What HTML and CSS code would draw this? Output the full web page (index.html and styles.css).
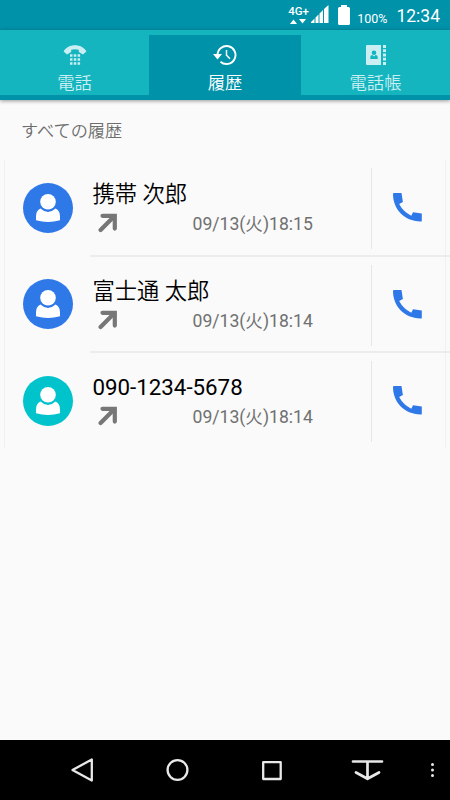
FILE: index.html
```html
<!doctype html>
<html lang="ja">
    <head>
        <meta charset="utf-8">
        <title>履歴</title>
        <link rel="stylesheet" href="styles.css">
    </head>
    <body>
        <svg class="symbols" width="0" height="0">
            <symbol id="person" viewBox="0 0 50 50">
                <path d="M17.500 25.500Q25 32.500 32.500 25.500Q37 27.500 37 33V37.200Q25 40.800 13 37.200V33Q13 27.500 17.500 25.500Z"/>
                <circle cx="25" cy="18.800" r="7.800"/>
            </symbol>
            <symbol id="outgoing" viewBox="0 0 20 20">
                <path d="M4.500 2.800H16.800V15.600" fill="none" stroke="currentColor" stroke-width="4.200" stroke-linecap="round"/>
                <path d="M16 3.500L2.600 17" fill="none" stroke="currentColor" stroke-width="4.200" stroke-linecap="round"/>
            </symbol>
            <symbol id="call" viewBox="0 0 29 29">
                <path d="M1 0H8.500L9.900 9L6.200 11Q10 18.500 18.300 22.800L20 19.200L28.800 20.500V27.700Q28.800 28.700 27.500 28.600C11 28 0 16 0 1Q0 0 1 0Z"/>
            </symbol>
        </svg>

        <div class="status">
            <div class="network">
                <span>4G+</span>
                <svg width="17" height="5" viewBox="0 0 17 5"><path d="M0 5L3.500 0.500L7 5ZM9 0H16L12.500 4.500Z"/></svg>
            </div>
            <svg class="signal" width="18" height="18" viewBox="0 0 18 18"><path d="M0 18V17L3.500 13.500V18ZM4.500 18V12.500L7.500 9.500V18ZM8.500 18V8.500L12 5V18ZM13 18V4L17.500 0V18Z"/></svg>
            <svg class="battery" width="12" height="20" viewBox="0 0 12 20"><path d="M3 2V0H9V2H10.500Q12 2 12 3.500V18.500Q12 20 10.500 20H1.500Q0 20 0 18.500V3.500Q0 2 1.500 2Z"/></svg>
            <span class="percent">100%</span>
            <span class="clock">12:34</span>
        </div>

        <ul class="tabs">
            <li>
                <svg width="24" height="20" viewBox="0 0 24 20">
                    <path d="M.600 6.500C5-1.700 19-1.700 23.400 6.500L20 9.500L15.800 7V4.700Q12 3.700 8.200 4.700V7L4 9.500Z"/>
                    <path d="M7 9.300h2.500v2.500h-2.500zm3.800 0h2.500v2.500h-2.500zm3.800 0h2.500v2.500h-2.500zm-7.600 4h2.500v2.500h-2.500zm3.800 0h2.500v2.500h-2.500zm3.800 0h2.500v2.500h-2.500zm-7.600 4h2.500v2.500h-2.500zm3.800 0h2.500v2.500h-2.500zm3.800 0h2.500v2.500h-2.500z"/>
                </svg>
                <span>電話</span>
            </li>
            <li class="active">
                <svg width="24" height="20" viewBox="0 0 24 20">
                    <path d="M4.500 10A9 9 0 1 1 7.500 16.700" fill="none" stroke="currentColor" stroke-width="1.900"/>
                    <path d="M0 9H9L4.500 14.500Z"/>
                    <path d="M13.500 5V10.300L17 13.800" fill="none" stroke="currentColor" stroke-width="1.500"/>
                </svg>
                <span>履歴</span>
            </li>
            <li>
                <svg width="24" height="20" viewBox="0 0 24 20">
                    <path fill-rule="evenodd" d="M3 0H17V20H3Q2 20 2 19V1Q2 0 3 0ZM10 5.500A2.300 2.300 0 1 0 10 10.100A2.300 2.300 0 1 0 10 5.500ZM6.300 14H13.700V12Q13.700 10 11.500 10L10 11.500L8.500 10Q6.300 10 6.300 12Z"/>
                    <path d="M19 0h3v3h-3zm0 4.300h3v2.800h-3zm0 4.300h3v2.800h-3zm0 4.200h3v2.800h-3zm0 4.200h3v3h-3z"/>
                </svg>
                <span>電話帳</span>
            </li>
        </ul>

        <div class="content">
            <h3>すべての履歴</h3>
            <ul class="history">
                <li>
                    <div class="avatar"><svg width="50" height="50"><use href="#person"/></svg></div>
                    <div class="info">
                        <p class="name">携帯 次郎</p>
                        <p class="date"><svg width="20" height="20"><use href="#outgoing"/></svg><span>09/13(火)18:15</span></p>
                    </div>
                    <div class="call"><svg width="29" height="29"><use href="#call"/></svg></div>
                </li>
                <li>
                    <div class="avatar"><svg width="50" height="50"><use href="#person"/></svg></div>
                    <div class="info">
                        <p class="name">富士通 太郎</p>
                        <p class="date"><svg width="20" height="20"><use href="#outgoing"/></svg><span>09/13(火)18:14</span></p>
                    </div>
                    <div class="call"><svg width="29" height="29"><use href="#call"/></svg></div>
                </li>
                <li>
                    <div class="avatar unknown"><svg width="50" height="50"><use href="#person"/></svg></div>
                    <div class="info">
                        <p class="name number">090-1234-5678</p>
                        <p class="date"><svg width="20" height="20"><use href="#outgoing"/></svg><span>09/13(火)18:14</span></p>
                    </div>
                    <div class="call"><svg width="29" height="29"><use href="#call"/></svg></div>
                </li>
            </ul>
        </div>

        <div class="navbar">
            <svg width="450" height="60" viewBox="0 0 450 60">
                <g fill="none" stroke="#e8e8e8" stroke-width="2.300" stroke-linejoin="round" stroke-linecap="round">
                    <path d="M91.800 19.500V40.500L72.500 30Z"/>
                    <circle cx="177.500" cy="30" r="9.900"/>
                    <rect x="263.200" y="22.200" width="17.500" height="16.800"/>
                    <path d="M353 21.500H382M367.500 22V38.500M356 32.500L367.500 38.800L379 32.500" stroke-width="2.700"/>
                </g>
                <g fill="#e8e8e8">
                    <circle cx="432.500" cy="24.500" r="1.500"/>
                    <circle cx="432.500" cy="30" r="1.500"/>
                    <circle cx="432.500" cy="35.500" r="1.500"/>
                </g>
            </svg>
        </div>
    </body>
</html>
```

FILE: styles.css
```css
html,body,ul,li,p,h3 {
    padding:0;
    margin:0;
}
ul,li {
    list-style:none;
}
body {
    height:800px;
    display:flex;
    flex-direction:column;
    overflow:hidden;
    background:#fafafa;
    font-family:Roboto,'Noto Sans CJK JP',sans-serif;
}
svg {
    display:block;
    fill:currentColor;
}
.symbols {
    position:absolute;
}
.status {
    height:30px;
    box-sizing:border-box;
    padding:5px 10px 0 0;
    display:flex;
    justify-content:flex-end;
    align-items:flex-start;
    background:#0092a9;
    color:#fff;
}
.network {
    width:22px;
    font-size:11.500px;
    line-height:13px;
    font-weight:500;
}
.network span {
    display:block;
}
.network svg {
    margin:1px 0 0 2px;
}
.signal {
    margin-left:1px;
}
.battery {
    margin-left:9px;
}
.percent {
    margin:6px 0 0 7px;
    font-size:12.500px;
    line-height:16px;
}
.clock {
    margin-left:9px;
    font-size:17.500px;
    line-height:22px;
}
.tabs {
    position:relative;
    height:65px;
    flex-shrink:0;
    display:flex;
    background:#15b5c0;
    border-bottom:5px solid #0092a9;
    box-shadow:0 1px 4px rgba(0, 0, 0, 0.4);
}
.tabs li {
    width:149px;
    margin-top:5px;
    padding-top:10px;
    box-sizing:border-box;
    display:flex;
    flex-direction:column;
    align-items:center;
    color:#caeef1;
    font-size:17.300px;
    font-weight:350;
    line-height:24px;
}
.tabs li span {
    margin-top:6px;
}
.tabs .active {
    width:152px;
    background:#0092a9;
    color:#fff;
}
.content {
    flex:1;
}
.content h3 {
    padding:19px 0 0 21px;
    height:41px;
    font-size:17.200px;
    line-height:24px;
    font-weight:350;
    color:#6e6e6e;
}
.history {
    margin:0 4px;
    height:288px;
    border-left:1px solid #f0f0f0;
    border-right:1px solid #f0f0f0;
}
.history li {
    height:96.670px;
    display:flex;
    margin-right:-5px;
}
.avatar {
    width:50px;
    height:50px;
    margin:22.500px 17.500px 0 17.500px;
    border-radius:50%;
    background:#2f78e8;
    color:#fff;
}
.avatar.unknown {
    background:#00c3cc;
}
.info {
    width:281px;
    box-sizing:border-box;
    padding:18px 0 0 2.500px;
    border-bottom:2px solid #ececec;
}
.name {
    font-size:22.300px;
    font-weight:350;
    line-height:32px;
    color:#000;
}
.name.number {
    font-weight:normal;
}
.date {
    display:flex;
    font-size:17.600px;
    line-height:28px;
    color:#707070;
}
.date svg {
    margin:3px 75px 0 5px;
    color:#777;
}
.call {
    flex:1;
    display:flex;
    border-bottom:2px solid #ececec;
    color:#2f78e8;
}
.call:before {
    content:'';
    height:81px;
    margin-top:8px;
    border-left:1px solid #e6e6e6;
}
.call svg {
    margin:33px 0 0 21px;
}
.history li:last-child .info,
.history li:last-child .call {
    border-color:transparent;
}
.navbar {
    height:60px;
    background:#000;
}
```
